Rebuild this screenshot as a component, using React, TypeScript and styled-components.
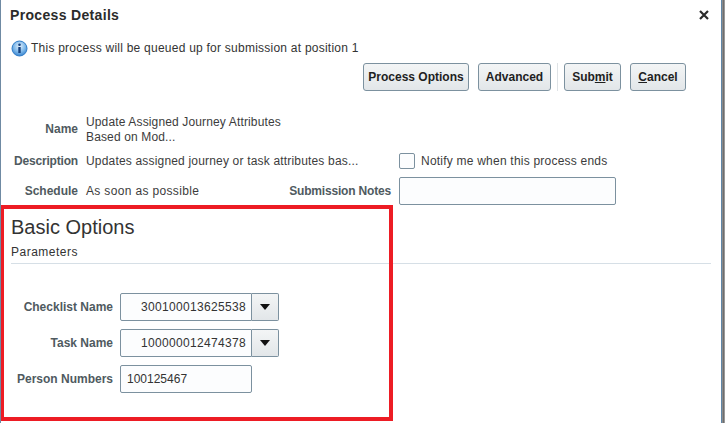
import React from "react";
import styled, { createGlobalStyle } from "styled-components";

const Global = createGlobalStyle`
  html, body { margin: 0; padding: 0; background: #fff; }
  body { font-family: "Liberation Sans", Arial, sans-serif; font-size: 12px; color: #333; }
`;

const Dialog = styled.div`
  position: relative;
  box-sizing: border-box;
  width: 725px;
  height: 423px;
  overflow: hidden;
  background: #fff;
  border-left: 1px solid #6f8aa3;
`;
const RightEdge = styled.div`
  position: absolute;
  top: 0;
  right: 0;
  width: 4px;
  height: 100%;
  background: linear-gradient(90deg, #5f86a8 0 1px, #8a8a8a 1px 2px, #6e6e6e 2px 3px, #9a9a9a 3px 4px);
`;
const TitleBar = styled.div`
  display: flex;
  align-items: center;
  justify-content: space-between;
  height: 30px;
  padding: 0 16px 0 9px;
`;
const Title = styled.div`
  font-size: 14px;
  font-weight: bold;
  letter-spacing: 0.33px;
  color: #2b2b2b;
`;
const Message = styled.div`
  display: flex;
  align-items: center;
  gap: 3px;
  height: 16px;
  margin-top: 10px;
  padding-left: 10px;
  letter-spacing: 0.24px;
  color: #333;
`;
const Toolbar = styled.div`
  display: flex;
  align-items: center;
  justify-content: flex-end;
  height: 28px;
  margin-top: 7px;
  padding-right: 39px;
`;
const Button = styled.button<{ $w: number }>`
  box-sizing: border-box;
  height: 28px;
  width: ${(p) => p.$w}px;
  padding: 0;
  border: 1px solid #7c919f;
  border-radius: 3px;
  background: linear-gradient(#f3f5f6, #e2e6e9);
  font: bold 12px "Liberation Sans", Arial, sans-serif;
  color: #1f1f1f;
  u { text-decoration: underline; }
`;
const ToolGap = styled.div`
  width: 9px;
`;
const Separator = styled.div`
  width: 1px;
  height: 28px;
  margin: 0 6px;
  background: #dfe3e6;
`;
const Details = styled.div`
  display: grid;
  grid-template-columns: 77px 192px 105px 1fr;
  grid-template-rows: 28px 36px 24px;
  column-gap: 8px;
  margin-top: 24px;
  align-items: center;
`;
const Label = styled.div<{ $tight?: boolean }>`
  font-weight: bold;
  color: #4f5a60;
  text-align: right;
  white-space: nowrap;
  letter-spacing: ${(p) => (p.$tight ? "-0.18px" : "0")};
`;
const Value = styled.div<{ $spacing?: number }>`
  color: #3c3c3c;
  line-height: 15px;
  letter-spacing: ${(p) => p.$spacing ?? 0.18}px;
  white-space: nowrap;
`;
const NameValue = styled(Value)`
  padding-top: 1px;
`;
const NotifyCell = styled.div`
  display: flex;
  align-items: center;
  gap: 6px;
  letter-spacing: 0.22px;
  color: #3c3c3c;
`;
const Check = styled.span`
  display: block;
  box-sizing: border-box;
  width: 16px;
  height: 16px;
  border: 1px solid #7c919f;
  border-radius: 2px;
  background: #fcfdfe;
`;
const Field = styled.div<{ $w: number }>`
  box-sizing: border-box;
  width: ${(p) => p.$w}px;
  height: 28px;
  display: flex;
  align-items: center;
  padding: 0 6px;
  border: 1px solid #7c919f;
  border-radius: 2px;
  background: #fcfdfe;
  color: #333;
  font-size: 12px;
`;
const Section = styled.div`
  margin-top: 12px;
  padding: 0 14px 0 10px;
`;
const Heading = styled.div`
  font-size: 20px;
  line-height: 24px;
  color: #333;
`;
const SubHeading = styled.div`
  margin-top: 5px;
  line-height: 16px;
  color: #333;
  letter-spacing: 0.5px;
  padding-bottom: 3px;
  border-bottom: 1px solid #d6dfe6;
`;
const ParamGrid = styled.div`
  display: grid;
  grid-template-columns: 102px max-content;
  grid-auto-rows: 28px;
  column-gap: 7px;
  row-gap: 8px;
  margin-top: 29px;
  align-items: center;
`;
const Combo = styled.div`
  display: flex;
  width: 159px;
  height: 28px;
`;
const ComboInput = styled.div`
  box-sizing: border-box;
  flex: 1;
  display: flex;
  align-items: center;
  justify-content: flex-end;
  padding-right: 5px;
  border: 1px solid #7c919f;
  border-radius: 2px 0 0 2px;
  background: #fcfdfe;
  letter-spacing: 0.33px;
  color: #333;
`;
const ComboButton = styled.div`
  box-sizing: border-box;
  width: 27px;
  display: flex;
  align-items: center;
  justify-content: center;
  border: 1px solid #7c919f;
  border-left: 0;
  border-radius: 0 2px 2px 0;
  background: linear-gradient(#f3f5f6, #e2e6e9);
`;
const Highlight = styled.div`
  position: absolute;
  left: -1px;
  top: 205px;
  box-sizing: border-box;
  width: 393px;
  height: 216px;
  border: 4px solid #ed1c24;
  pointer-events: none;
`;

const InfoIcon = () => (
  <svg width="17" height="17" viewBox="0 0 17 17">
    <defs>
      <radialGradient id="info" cx="50%" cy="35%" r="70%">
        <stop offset="0%" stopColor="#e4f1fc" />
        <stop offset="55%" stopColor="#7db8ea" />
        <stop offset="100%" stopColor="#2a78c8" />
      </radialGradient>
    </defs>
    <circle cx="8.5" cy="8.5" r="7.5" fill="url(#info)" stroke="#2f7cc7" />
    <circle cx="8.5" cy="4.8" r="1.3" fill="#14407e" />
    <rect x="7.3" y="7" width="2.4" height="6" fill="#14407e" />
  </svg>
);
const CloseIcon = () => (
  <svg width="10" height="10" viewBox="0 0 10 10">
    <path d="M1 1L9 9M9 1L1 9" stroke="#2a2a2a" strokeWidth="2.2" />
  </svg>
);
const Arrow = () => (
  <svg width="10" height="6" viewBox="0 0 10 6">
    <path d="M0 0H10L5 6Z" fill="#111" />
  </svg>
);

export default function App() {
  return (
    <>
      <Global />
      <Dialog>
        <TitleBar>
          <Title>Process Details</Title>
          <CloseIcon />
        </TitleBar>
        <Message>
          <InfoIcon />
          <span>This process will be queued up for submission at position 1</span>
        </Message>
        <Toolbar>
          <Button $w={106}>Process Options</Button>
          <ToolGap />
          <Button $w={73}>Advanced</Button>
          <Separator />
          <Button $w={57}>
            Sub<u>m</u>it
          </Button>
          <ToolGap />
          <Button $w={56}>
            <u>C</u>ancel
          </Button>
        </Toolbar>
        <Details>
          <Label>Name</Label>
          <NameValue $spacing={0.14}>
            Update Assigned Journey Attributes
            <br />
            Based on Mod...
          </NameValue>
          <div />
          <div />
          <Label $tight>Description</Label>
          <Value>Updates assigned journey or task attributes bas...</Value>
          <div />
          <NotifyCell>
            <Check />
            Notify me when this process ends
          </NotifyCell>
          <Label>Schedule</Label>
          <Value $spacing={0.34}>As soon as possible</Value>
          <Label $tight>Submission Notes</Label>
          <Field $w={217} />
        </Details>
        <Section>
          <Heading>Basic Options</Heading>
          <SubHeading>Parameters</SubHeading>
          <ParamGrid>
            <Label>Checklist Name</Label>
            <Combo>
              <ComboInput>300100013625538</ComboInput>
              <ComboButton>
                <Arrow />
              </ComboButton>
            </Combo>
            <Label>Task Name</Label>
            <Combo>
              <ComboInput>100000012474378</ComboInput>
              <ComboButton>
                <Arrow />
              </ComboButton>
            </Combo>
            <Label>Person Numbers</Label>
            <Field $w={132}>100125467</Field>
          </ParamGrid>
        </Section>
        <RightEdge />
        <Highlight />
      </Dialog>
    </>
  );
}
